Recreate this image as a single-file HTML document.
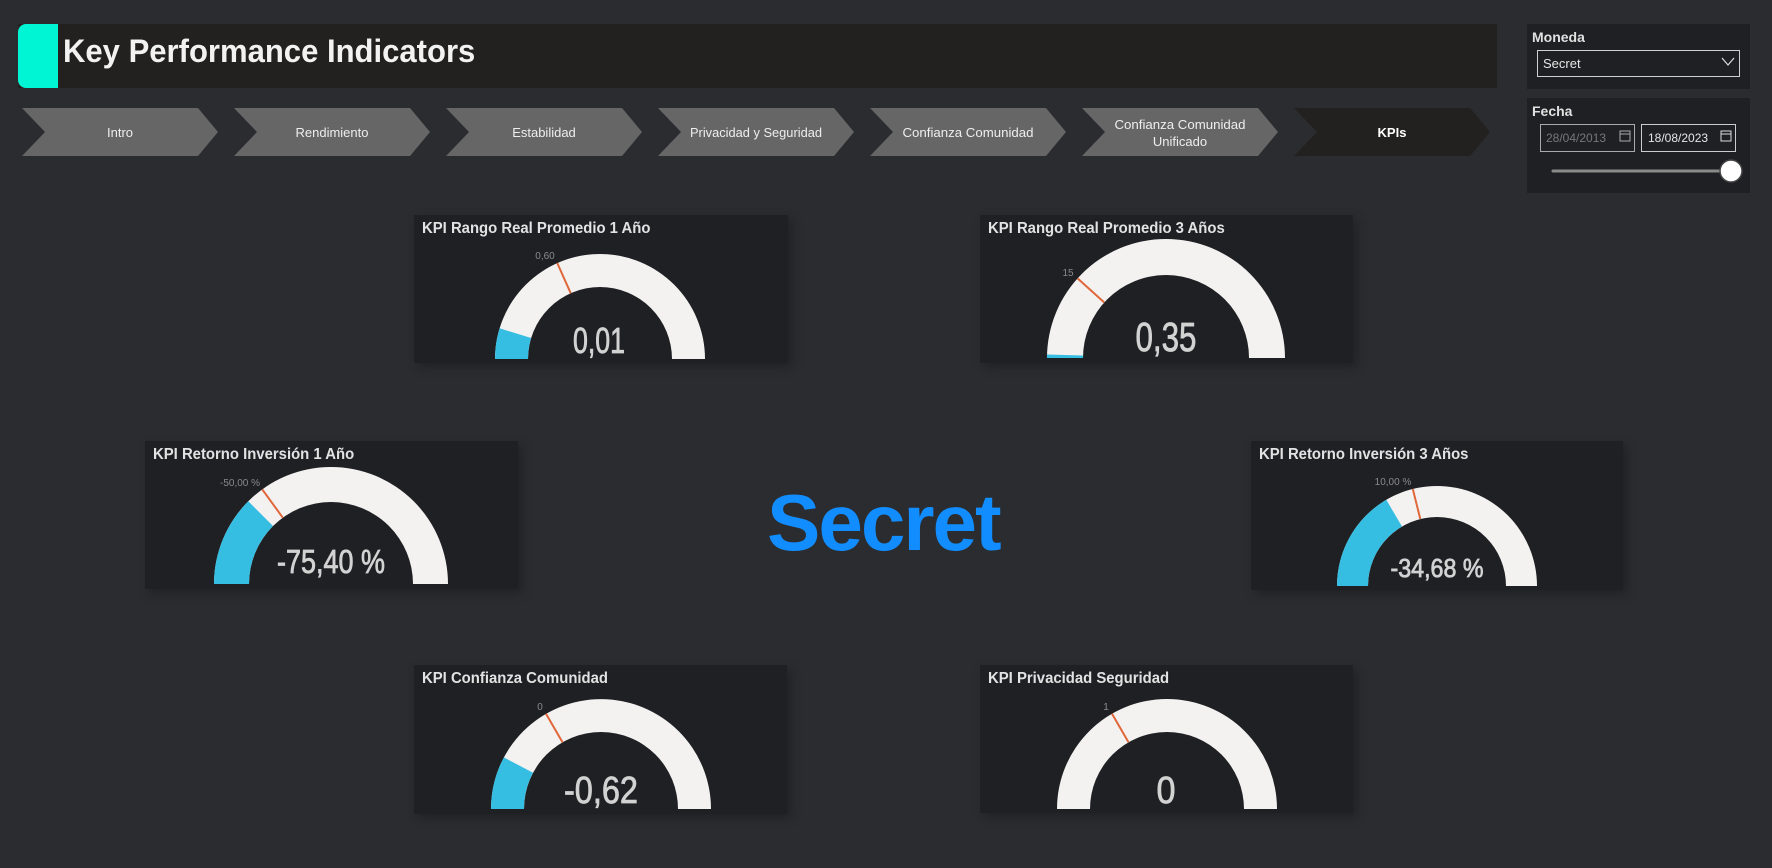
<!DOCTYPE html>
<html><head><meta charset="utf-8"><style>
html,body{margin:0;padding:0;}
body{width:1772px;height:868px;background:#2b2c30;position:relative;overflow:hidden;font-family:"Liberation Sans",sans-serif;}
.abs{position:absolute;}
.card{position:absolute;background:#1f2024;box-shadow:4px 4px 10px rgba(0,0,0,0.25);}
.ct{position:absolute;left:8px;top:5px;color:#e2e2e2;font-size:16px;font-weight:bold;white-space:nowrap;transform:scaleX(0.93);transform-origin:left top;}
.panel{position:absolute;background:#1f2024;}
.lbl{position:absolute;color:#e0e0e0;font-size:14px;font-weight:bold;}
</style></head><body>
<div class="abs" style="left:18px;top:24px;width:1479px;height:64px;background:#23211f;"></div>
<div class="abs" style="left:18px;top:24px;width:40px;height:64px;background:#00f5d4;border-radius:8px 0 0 8px;"></div>
<div class="abs" style="left:63px;top:33px;color:#f2f2f2;font-size:32px;font-weight:bold;white-space:nowrap;transform:scaleX(0.97);transform-origin:left top;">Key Performance Indicators</div>

<div class="card" style="left:414px;top:215px;width:374px;height:148px;"><div class="ct">KPI Rango Real Promedio 1 Año</div></div>
<div class="card" style="left:980px;top:215px;width:373px;height:148px;"><div class="ct">KPI Rango Real Promedio 3 Años</div></div>
<div class="card" style="left:145px;top:441px;width:373px;height:148px;"><div class="ct">KPI Retorno Inversión 1 Año</div></div>
<div class="card" style="left:1251px;top:441px;width:372px;height:149px;"><div class="ct">KPI Retorno Inversión 3 Años</div></div>
<div class="card" style="left:414px;top:665px;width:373px;height:149px;"><div class="ct">KPI Confianza Comunidad</div></div>
<div class="card" style="left:980px;top:665px;width:373px;height:148px;"><div class="ct">KPI Privacidad Seguridad</div></div>

<div class="panel" style="left:1527px;top:24px;width:223px;height:65px;"></div>
<div class="lbl" style="left:1532px;top:29px;">Moneda</div>
<div class="abs" style="left:1537px;top:50px;width:201px;height:25px;border:1px solid #d0d0d0;"></div>
<div class="abs" style="left:1543px;top:56px;color:#e6e6e6;font-size:13px;">Secret</div>
<div class="panel" style="left:1527px;top:98px;width:223px;height:95px;"></div>
<div class="lbl" style="left:1532px;top:103px;">Fecha</div>
<div class="abs" style="left:1540px;top:124px;width:93px;height:26px;border:1px solid #aaa;"></div>
<div class="abs" style="left:1546px;top:131px;color:#777;font-size:12px;">28/04/2013</div>
<div class="abs" style="left:1641px;top:124px;width:93px;height:26px;border:1px solid #ccc;"></div>
<div class="abs" style="left:1648px;top:131px;color:#e6e6e6;font-size:12px;">18/08/2023</div>

<div class="abs" style="left:767px;top:478px;color:#118dff;font-size:80px;font-weight:bold;letter-spacing:-2px;line-height:90px;">Secret</div>

<svg class="abs" style="left:0;top:0" width="1772" height="868" xmlns="http://www.w3.org/2000/svg" font-family="Liberation Sans, sans-serif">
<g fill="#666666">
<polygon points="22,108 198,108 218,132 198,156 22,156 45,132"/>
<polygon points="234,108 410,108 430,132 410,156 234,156 257,132"/>
<polygon points="446,108 622,108 642,132 622,156 446,156 469,132"/>
<polygon points="658,108 834,108 854,132 834,156 658,156 681,132"/>
<polygon points="870,108 1046,108 1066,132 1046,156 870,156 893,132"/>
<polygon points="1082,108 1258,108 1278,132 1258,156 1082,156 1105,132"/>
</g>
<polygon points="1294,108 1470,108 1490,132 1470,156 1294,156 1317,132" fill="#23211f"/>
<g fill="#eeeeee" font-size="13" text-anchor="middle">
<text x="120" y="137">Intro</text>
<text x="332" y="137">Rendimiento</text>
<text x="544" y="137">Estabilidad</text>
<text x="756" y="137" textLength="132" lengthAdjust="spacingAndGlyphs">Privacidad y Seguridad</text>
<text x="968" y="137" textLength="131" lengthAdjust="spacingAndGlyphs">Confianza Comunidad</text>
<text x="1180" y="129" textLength="131" lengthAdjust="spacingAndGlyphs">Confianza Comunidad</text>
<text x="1180" y="146">Unificado</text>
<text x="1392" y="137" font-weight="bold" fill="#ffffff">KPIs</text>
</g>
<polyline points="1722,58 1728,65 1734,58" fill="none" stroke="#ddd" stroke-width="1.2"/>
<g fill="none" stroke="#aaa" stroke-width="1"><rect x="1620" y="131" width="10" height="10"/><line x1="1620" y1="134" x2="1630" y2="134"/></g>
<g fill="none" stroke="#ddd" stroke-width="1"><rect x="1721" y="131" width="10" height="10"/><line x1="1721" y1="134" x2="1731" y2="134"/></g>
<line x1="1553" y1="171" x2="1725" y2="171" stroke="#8a8a8a" stroke-width="3" stroke-linecap="round"/>
<circle cx="1731" cy="171" r="11" fill="#fff" stroke="#444" stroke-width="1.5"/>

<g fill="#f3f2f0">
<path d="M495,359 A105,105 0 0 1 705,359 L672,359 A72,72 0 0 0 528,359 Z"/>
<path d="M1047,358 A119,119 0 0 1 1285,358 L1249,358 A83,83 0 0 0 1083,358 Z"/>
<path d="M214,584 A117,117 0 0 1 448,584 L413,584 A82,82 0 0 0 249,584 Z"/>
<path d="M1337,586 A100,100 0 0 1 1537,586 L1506,586 A69,69 0 0 0 1368,586 Z"/>
<path d="M491,809 A110,110 0 0 1 711,809 L678,809 A77,77 0 0 0 524,809 Z"/>
<path d="M1057,809 A110,110 0 0 1 1277,809 L1244,809 A77,77 0 0 0 1090,809 Z"/>
</g>
<g fill="#35bde2">
<path d="M495,359 A105,105 0 0 1 499.6,328.3 L531.1,338 A72,72 0 0 0 528,359 Z"/>
<path d="M1047,358 A119,119 0 0 1 1047.1,354.5 L1083.05,355.5 A83,83 0 0 0 1083,358 Z"/>
<path d="M214,584 A117,117 0 0 1 248.3,501.3 L273,526 A82,82 0 0 0 249,584 Z"/>
<path d="M1337,586 A100,100 0 0 1 1386.25,499.8 L1402,526.5 A69,69 0 0 0 1368,586 Z"/>
<path d="M491,809 A110,110 0 0 1 503.9,757.4 L533,772.8 A77,77 0 0 0 524,809 Z"/>
</g>
<g stroke="#e0673a" stroke-width="2">
<line x1="557.3" y1="263.1" x2="570.7" y2="293.2"/>
<line x1="1077.6" y1="278.4" x2="1104.3" y2="302.5"/>
<line x1="262.2" y1="489.3" x2="282.8" y2="517.7"/>
<line x1="1412.8" y1="489" x2="1420.3" y2="519"/>
<line x1="546" y1="713.7" x2="562.5" y2="742.3"/>
<line x1="1112" y1="713.7" x2="1128.5" y2="742.3"/>
</g>
<g fill="#8a8a8a" font-size="10" text-anchor="middle">
<text x="545" y="259">0,60</text>
<text x="1068" y="276">15</text>
<text x="240" y="486">-50,00 %</text>
<text x="1393" y="485">10,00 %</text>
<text x="540" y="710">0</text>
<text x="1106" y="710">1</text>
</g>
<g fill="#d2d2d2" stroke="#d2d2d2" stroke-width="0.8" text-anchor="middle">
<text x="599" y="353" font-size="36" textLength="52" lengthAdjust="spacingAndGlyphs">0,01</text>
<text x="1166" y="351" font-size="41" textLength="61" lengthAdjust="spacingAndGlyphs">0,35</text>
<text x="331" y="573" font-size="33" textLength="108" lengthAdjust="spacingAndGlyphs">-75,40 %</text>
<text x="1437" y="577" font-size="26" textLength="93" lengthAdjust="spacingAndGlyphs">-34,68 %</text>
<text x="601" y="803" font-size="38" textLength="74" lengthAdjust="spacingAndGlyphs">-0,62</text>
<text x="1166" y="803" font-size="38" textLength="19" lengthAdjust="spacingAndGlyphs">0</text>
</g>
</svg>
</body></html>
